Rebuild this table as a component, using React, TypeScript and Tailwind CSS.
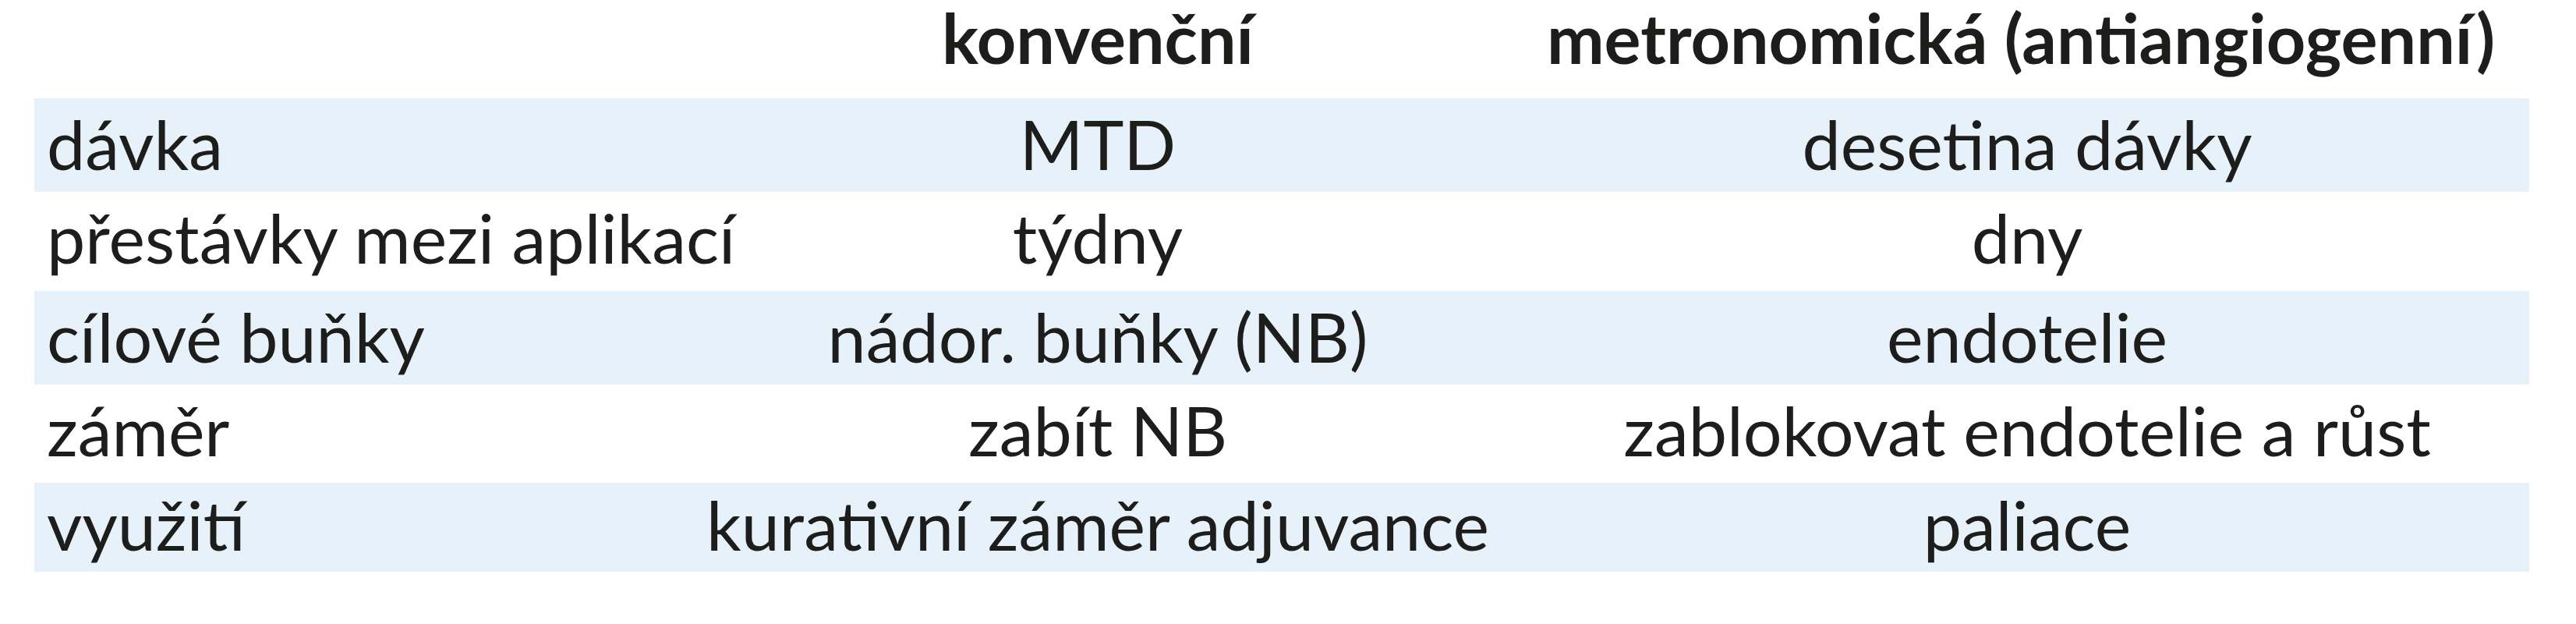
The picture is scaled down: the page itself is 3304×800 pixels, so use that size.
const rows = [
  { label: 'dávka', conv: 'MTD', metro: 'desetina dávky', shade: true, h: 'h-[120px]', pt: 'pt-[5px]' },
  { label: 'přestávky mezi aplikací', conv: 'týdny', metro: 'dny', shade: false, h: 'h-[127px]', pt: 'pt-[5px]' },
  { label: 'cílové buňky', conv: 'nádor. buňky (NB)', metro: 'endotelie', shade: true, h: 'h-[120px]', pt: 'pt-[5px]' },
  { label: 'záměr', conv: 'zabít NB', metro: 'zablokovat endotelie a růst', shade: false, h: 'h-[126px]', pt: 'pt-[5px]' },
  { label: 'využití', conv: 'kurativní záměr adjuvance', metro: 'paliace', shade: true, h: 'h-[114px]', pt: 'pt-0' },
];

export default function App() {
  return (
    <div className="h-[800px] w-[3304px] bg-white pl-[44px] text-[88px] text-[#1d1d1b] font-['Lato','Open_Sans',sans-serif]">
      <div className="flex w-[3200px] flex-col">
        {/* header */}
        <div className="flex h-[126px] font-bold leading-[96px] whitespace-nowrap">
          <div className="w-[816px] shrink-0" />
          <div className="w-[1096px] shrink-0 text-center">konvenční</div>
          <div className="w-[1288px] shrink-0 pr-[16px] text-center">metronomická (antiangiogenní)</div>
        </div>

        {rows.map((r) => (
          <div
            key={r.label}
            className={`flex ${r.h} ${r.pt} leading-[106px] whitespace-nowrap ${r.shade ? 'bg-[#e7f1fa]' : 'bg-white'}`}
          >
            <div className="w-[816px] shrink-0 pl-[16px]">{r.label}</div>
            <div className="w-[1096px] shrink-0 text-center">{r.conv}</div>
            <div className="w-[1288px] shrink-0 text-center">{r.metro}</div>
          </div>
        ))}
      </div>
    </div>
  );
}
